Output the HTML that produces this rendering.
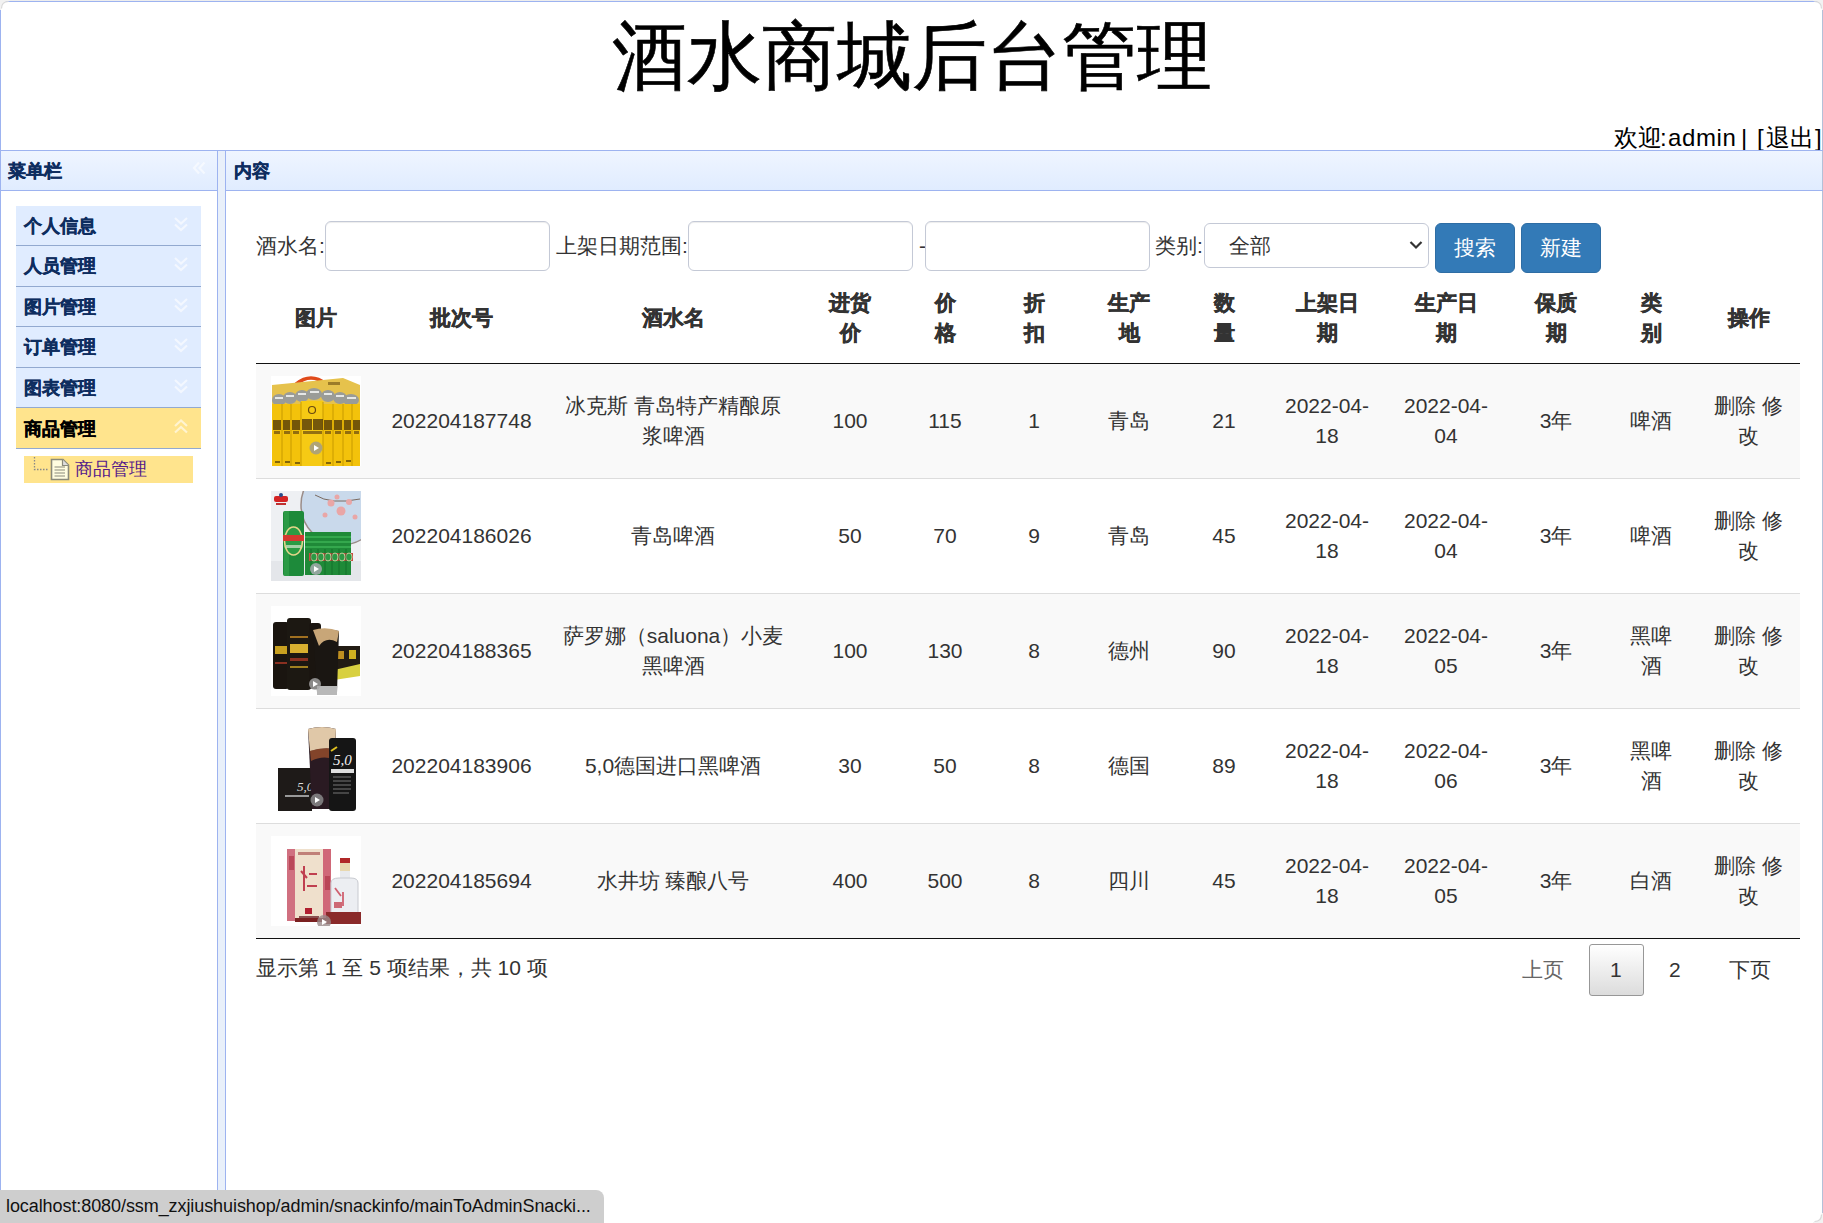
<!DOCTYPE html>
<html><head><meta charset="utf-8">
<style>
html,body{margin:0;padding:0}
body{width:1823px;height:1223px;overflow:hidden;position:relative;background:#fff;font-family:"Liberation Sans",sans-serif;color:#333}
.abs{position:absolute}
.hl{position:absolute;height:1px;background:#9DB3F0}
.vl{position:absolute;width:1px;background:#9DB3F0}
.phead{position:absolute;top:151px;height:39px;background:linear-gradient(to bottom,#EFF5FF 0,#E0ECFF 100%)}
.ptitle{position:absolute;top:159px;font-size:18px;line-height:24px;font-weight:bold;color:#0E2D5F;white-space:nowrap;-webkit-text-stroke:0.4px currentColor}
#title{position:absolute;left:0;width:1823px;top:6px;text-align:center;font-size:75px;line-height:100px;color:#000;white-space:nowrap;-webkit-text-stroke:0.6px #000}
.wl{position:absolute;top:122px;font-size:24px;line-height:32px;color:#000;white-space:nowrap}
.acc{position:absolute;left:16px;width:185px;background:#E0ECFF;border-bottom:1px solid #92A9D0}
.acc span{position:absolute;left:8px;top:8px;font-size:18px;line-height:24px;font-weight:bold;color:#0E2D5F;white-space:nowrap;-webkit-text-stroke:0.4px currentColor}
.acc svg{position:absolute;left:172px;top:10px}
.lbl{position:absolute;top:231px;font-size:21px;line-height:30px;color:#333;white-space:nowrap}
.inp{position:absolute;top:221px;height:48px;width:223px;border:1px solid #c4c9d6;border-radius:6px;background:#fff;box-shadow:inset 0 1px 1px rgba(0,0,0,.075)}
.btn{position:absolute;top:223px;height:48px;width:78px;background:#337ab7;border:1px solid #2e6da4;border-radius:6px;color:#fff;font-size:21px;line-height:48px;text-align:center;white-space:nowrap}
table.dt{position:absolute;left:256px;top:273px;width:1544px;border-collapse:separate;border-spacing:0;table-layout:fixed;font-size:21px;line-height:30px;color:#333}
table.dt th{font-weight:bold;-webkit-text-stroke:0.5px currentColor;padding:15px 0;text-align:center;border-bottom:1px solid #111;vertical-align:middle}
table.dt td{padding:12px 0;text-align:center;vertical-align:middle;border-top:1px solid #ddd;height:90px}
table.dt tr.first td{border-top:none}
table.dt tr.odd td{background:#f9f9f9}
table.dt tbody tr:last-child td{border-bottom:1px solid #111}
.ctext{display:inline-block}
#info{position:absolute;left:256px;top:953px;font-size:21px;line-height:30px;color:#333;white-space:nowrap}
.pg{position:absolute;top:955px;font-size:21px;line-height:30px;color:#333;white-space:nowrap}
#status{position:absolute;left:0;top:1190px;width:604px;height:33px;background:#cecece;border-top-right-radius:8px;font-size:18px;line-height:33px;color:#111;white-space:nowrap;overflow:hidden;letter-spacing:-0.08px;padding-left:6px;box-sizing:border-box}
</style></head>
<body>
<!-- outer borders -->
<div class="abs" style="left:0;top:0;width:1823px;height:1px;background:#ededed"></div>
<div class="hl" style="left:0;top:1px;width:1823px"></div>
<div class="vl" style="left:0;top:1px;height:1222px"></div>
<div class="vl" style="left:1822px;top:1px;height:1222px;background:#b4c0d8"></div>
<div id="title">酒水商城后台管理</div>
<div class="wl" style="left:1614px">欢迎</div><div class="wl" style="left:1660px">:</div><div class="wl" style="left:1668px;letter-spacing:0.6px">admin</div><div class="wl" style="left:1741px">|</div><div class="wl" style="left:1757px">[</div><div class="wl" style="left:1766px">退出</div><div class="wl" style="left:1815px">]</div>
<div class="hl" style="left:0;top:150px;width:1823px"></div>

<!-- west -->
<div class="phead" style="left:1px;width:216px"></div>
<div class="ptitle" style="left:8px">菜单栏</div>
<svg class="abs" style="left:191px;top:160px" width="16" height="16" viewBox="0 0 16 16"><path d="M8 2.5 L3 8 L8 13.5 M13.5 2.5 L8.5 8 L13.5 13.5" stroke="#fff" stroke-width="2.2" fill="none" opacity=".55"/></svg>
<div class="hl" style="left:0;top:190px;width:218px"></div>
<div class="vl" style="left:217px;top:150px;height:1073px"></div>
<div class="abs" style="left:218px;top:151px;width:7px;height:1072px;background:#E9F0FA"></div>
<div class="vl" style="left:225px;top:150px;height:1073px"></div>

<!-- center header -->
<div class="phead" style="left:226px;width:1596px"></div>
<div class="ptitle" style="left:234px">内容</div>
<div class="hl" style="left:225px;top:190px;width:1598px"></div>

<!-- accordion -->
<div class="acc" style="top:206px;height:39px"><span>个人信息</span><svg style="position:absolute;left:156px;top:10px" width="18" height="17" viewBox="0 0 18 17"><path d="M3 2 L9 7.5 L15 2 M3 8.5 L9 14 L15 8.5" stroke="#fff" stroke-width="2.2" fill="none" opacity=".6"/></svg></div>
<div class="acc" style="top:246px;height:40px"><span>人员管理</span><svg style="position:absolute;left:156px;top:10px" width="18" height="17" viewBox="0 0 18 17"><path d="M3 2 L9 7.5 L15 2 M3 8.5 L9 14 L15 8.5" stroke="#fff" stroke-width="2.2" fill="none" opacity=".6"/></svg></div>
<div class="acc" style="top:287px;height:39px"><span>图片管理</span><svg style="position:absolute;left:156px;top:10px" width="18" height="17" viewBox="0 0 18 17"><path d="M3 2 L9 7.5 L15 2 M3 8.5 L9 14 L15 8.5" stroke="#fff" stroke-width="2.2" fill="none" opacity=".6"/></svg></div>
<div class="acc" style="top:327px;height:40px"><span>订单管理</span><svg style="position:absolute;left:156px;top:10px" width="18" height="17" viewBox="0 0 18 17"><path d="M3 2 L9 7.5 L15 2 M3 8.5 L9 14 L15 8.5" stroke="#fff" stroke-width="2.2" fill="none" opacity=".6"/></svg></div>
<div class="acc" style="top:368px;height:39px"><span>图表管理</span><svg style="position:absolute;left:156px;top:10px" width="18" height="17" viewBox="0 0 18 17"><path d="M3 2 L9 7.5 L15 2 M3 8.5 L9 14 L15 8.5" stroke="#fff" stroke-width="2.2" fill="none" opacity=".6"/></svg></div>
<div class="acc" style="top:408px;height:40px;background:#ffe48d"><span style="color:#000;top:9px">商品管理</span><svg style="position:absolute;left:156px;top:10px" width="18" height="17" viewBox="0 0 18 17"><path d="M3 8 L9 2.5 L15 8 M3 14.5 L9 9 L15 14.5" stroke="#fff" stroke-width="2.2" fill="none" opacity=".6"/></svg></div>
<div class="abs" style="left:24px;top:456px;width:169px;height:27px;background:#ffe48d"></div>
<svg class="abs" style="left:30px;top:456px" width="42" height="27" viewBox="0 0 42 27"><path d="M4.5 1 V13.5 H18" stroke="#888" stroke-width="1.3" stroke-dasharray="1.5 1.5" fill="none"/><path d="M21.5 3.5 H33 L38.5 9 V23.5 H21.5 Z" fill="#FFFDE0" stroke="#8a8a7a" stroke-width="1.6"/><path d="M32.5 3.5 V9.5 H38.5" fill="#ddd" stroke="#8a8a7a" stroke-width="1.2"/><path d="M24.5 11 H35 M24.5 14 H35 M24.5 17 H35 M24.5 20 H35" stroke="#8a8a7a" stroke-width="1.2"/></svg>
<div class="abs" style="left:75px;top:457px;font-size:18px;line-height:24px;color:#551A8B;white-space:nowrap">商品管理</div>

<!-- search form -->
<div class="lbl" style="left:256px">酒水名:</div>
<div class="inp" style="left:325px"></div>
<div class="lbl" style="left:556px">上架日期范围:</div>
<div class="inp" style="left:688px"></div>
<div class="lbl" style="left:919px">-</div>
<div class="inp" style="left:925px"></div>
<div class="lbl" style="left:1155px">类别:</div>
<div class="abs" style="left:1204px;top:223px;width:223px;height:43px;border:1px solid #c4c9d6;border-radius:6px;background:#fff"></div>
<div class="abs" style="left:1229px;top:231px;font-size:21px;line-height:30px;color:#333">全部</div>
<svg class="abs" style="left:1408px;top:239px" width="16" height="12" viewBox="0 0 16 12"><path d="M2.5 3 L8 8.5 L13.5 3" stroke="#333" stroke-width="2.2" fill="none"/></svg>
<div class="btn" style="left:1435px">搜索</div>
<div class="btn" style="left:1521px">新建</div>

<table class="dt">
<colgroup><col style="width:120px"><col style="width:171px"><col style="width:252px"><col style="width:102px"><col style="width:88px"><col style="width:90px"><col style="width:100px"><col style="width:90px"><col style="width:116px"><col style="width:122px"><col style="width:98px"><col style="width:92px"><col style="width:103px"></colgroup>
<thead><tr><th>图片</th><th>批次号</th><th>酒水名</th><th>进货<br>价</th><th>价<br>格</th><th>折<br>扣</th><th>生产<br>地</th><th>数<br>量</th><th>上架日<br>期</th><th>生产日<br>期</th><th>保质<br>期</th><th>类<br>别</th><th>操作</th></tr></thead>
<tbody>
<tr class="odd first"><td><svg width="90" height="90" viewBox="0 0 90 90" style="display:block;margin:0 auto"><rect width="90" height="90" fill="#fff"/><path d="M25 8 Q40 -4 55 8" stroke="#e04a1a" stroke-width="3.5" fill="none"/><path d="M1 9 L72 2 L89 9 L89 30 L1 30 Z" fill="#E6C24C"/><rect x="57" y="6" width="12" height="3" fill="#8a6a20" opacity=".8"/><g fill="#9a9c98"><ellipse cx="8" cy="24" rx="7" ry="6"/><ellipse cx="19" cy="22" rx="7" ry="6"/><ellipse cx="31" cy="20" rx="7" ry="6"/><ellipse cx="43" cy="18" rx="8" ry="6"/><ellipse cx="57" cy="20" rx="7" ry="6"/><ellipse cx="69" cy="22" rx="7" ry="6"/><ellipse cx="80" cy="24" rx="8" ry="6"/></g><g fill="#e6e8e6"><rect x="4" y="21" width="8" height="2"/><rect x="15" y="19" width="8" height="2"/><rect x="27" y="17" width="8" height="2"/><rect x="39" y="15" width="9" height="2"/><rect x="53" y="17" width="8" height="2"/><rect x="65" y="19" width="8" height="2"/><rect x="76" y="21" width="9" height="2"/></g><rect x="1" y="28" width="88" height="62" fill="#F3C20B"/><rect x="30" y="25" width="22" height="65" fill="#F6CA14"/><path d="M11 28 V90 M20 28 V90 M30 26 V90 M52 26 V90 M62 28 V90 M72 28 V90 M81 28 V90" stroke="#c89a00" stroke-width="1"/><circle cx="41" cy="34" r="3.5" fill="none" stroke="#6a4a10" stroke-width="1.2"/><g fill="#4a3208" opacity=".75"><rect x="2" y="44" width="8" height="10"/><rect x="12" y="44" width="7" height="10"/><rect x="21" y="44" width="8" height="10"/><rect x="31" y="43" width="10" height="11"/><rect x="42" y="43" width="10" height="11"/><rect x="53" y="44" width="8" height="10"/><rect x="63" y="44" width="8" height="10"/><rect x="73" y="44" width="7" height="10"/><rect x="82" y="44" width="7" height="10"/></g><g fill="#6a4a10" opacity=".7"><rect x="3" y="55" width="6" height="3"/><rect x="13" y="55" width="6" height="3"/><rect x="22" y="55" width="6" height="3"/><rect x="32" y="55" width="19" height="3"/><rect x="54" y="55" width="6" height="3"/><rect x="64" y="55" width="6" height="3"/><rect x="74" y="55" width="6" height="3"/><rect x="83" y="55" width="5" height="3"/></g><g fill="#3a2a08" opacity=".6"><rect x="4" y="85" width="5" height="2"/><rect x="14" y="85" width="5" height="2"/><rect x="24" y="86" width="5" height="2"/><rect x="55" y="86" width="5" height="2"/><rect x="65" y="85" width="5" height="2"/><rect x="75" y="84" width="5" height="2"/></g><circle cx="45" cy="72" r="6.5" fill="#a8a080" opacity=".9"/><path d="M43 69 L48 72 L43 75 Z" fill="#fff"/></svg></td><td>202204187748</td><td>冰克斯 青岛特产精酿原<br>浆啤酒</td><td>100</td><td>115</td><td>1</td><td>青岛</td><td>21</td><td>2022-04-<br>18</td><td>2022-04-<br>04</td><td>3年</td><td>啤酒</td><td>删除 修<br>改</td></tr>
<tr class="even"><td><svg width="90" height="90" viewBox="0 0 90 90" style="display:block;margin:0 auto"><rect width="90" height="90" fill="#eef0f3"/><rect x="0" y="70" width="90" height="20" fill="#e4e6ea"/><circle cx="70" cy="14" r="40" fill="#c9d9eb"/><circle cx="70" cy="14" r="40" fill="none" stroke="#9a8c88" stroke-width="1.5"/><rect x="0" y="0" width="30" height="90" fill="#eef0f3" opacity="0"/><path d="M44 4 Q60 14 89 8" stroke="#7a6a60" stroke-width="1" fill="none"/><g fill="#e9a6a6"><circle cx="60" cy="12" r="3.5"/><circle cx="70" cy="20" r="4.5"/><circle cx="78" cy="11" r="3"/><circle cx="54" cy="24" r="2.5"/><circle cx="84" cy="26" r="2.5"/><circle cx="66" cy="6" r="2.5"/></g><rect x="3" y="5" width="14" height="6" rx="2" fill="#d42424"/><circle cx="10" cy="4" r="2" fill="#2a4a8a"/><rect x="5" y="12" width="10" height="2" fill="#c03030"/><rect x="34" y="41" width="46" height="43" fill="#1f8a38"/><path d="M34 46 H80 M34 51 H80 M34 56 H80" stroke="#3cb254" stroke-width="1.4"/><rect x="38" y="62" width="44" height="8" fill="#c94a40"/><g fill="#2a9a44" stroke="#d8e0b0" stroke-width=".8"><ellipse cx="43" cy="66" rx="3" ry="4"/><ellipse cx="50" cy="66" rx="3" ry="4"/><ellipse cx="57" cy="66" rx="3" ry="4"/><ellipse cx="64" cy="66" rx="3" ry="4"/><ellipse cx="71" cy="66" rx="3" ry="4"/><ellipse cx="78" cy="66" rx="3" ry="4"/></g><path d="M40 58 V84 M47 58 V84 M54 58 V84 M61 58 V84 M68 58 V84 M75 58 V84" stroke="#136a28" stroke-width=".8"/><rect x="12" y="20" width="21" height="65" rx="2" fill="#1d8a3a"/><rect x="13" y="20" width="5" height="65" fill="#3aaa50" opacity=".5"/><ellipse cx="22.5" cy="50" rx="9" ry="14" fill="#2a9c44" stroke="#e6d68a" stroke-width="1.6"/><rect x="12" y="44" width="21" height="6" fill="#d43a30"/><rect x="15" y="54" width="15" height="3" fill="#d8e8d0" opacity=".7"/><circle cx="45" cy="78" r="6" fill="#a8aab0" opacity=".85"/><path d="M43 75 L48 78 L43 81 Z" fill="#fff"/></svg></td><td>202204186026</td><td>青岛啤酒</td><td>50</td><td>70</td><td>9</td><td>青岛</td><td>45</td><td>2022-04-<br>18</td><td>2022-04-<br>04</td><td>3年</td><td>啤酒</td><td>删除 修<br>改</td></tr>
<tr class="odd"><td><svg width="90" height="90" viewBox="0 0 90 90" style="display:block;margin:0 auto"><rect width="90" height="90" fill="#fff"/><rect x="2" y="16" width="16" height="67" rx="3" fill="#1a1510"/><rect x="16" y="12" width="24" height="72" rx="3" fill="#1c1812"/><rect x="38" y="17" width="12" height="66" rx="3" fill="#1a1510"/><rect x="4" y="40" width="12" height="8" fill="#c8a020"/><rect x="19" y="38" width="18" height="9" fill="#d8b030"/><rect x="19" y="30" width="18" height="2" fill="#a07020"/><rect x="19" y="52" width="18" height="3" fill="#8a3020"/><rect x="19" y="60" width="18" height="2" fill="#a08020"/><rect x="4" y="56" width="12" height="2" fill="#8a3020"/><rect x="63" y="40" width="26" height="30" fill="#221c14"/><rect x="67" y="45" width="6" height="8" fill="#c09020"/><rect x="78" y="44" width="7" height="9" fill="#d0b020"/><path d="M63 64 L89 58 L89 70 L63 74 Z" fill="#d8d040"/><path d="M42 24 Q55 22 68 25 L66 86 L46 86 Z" fill="#1a1612"/><path d="M42 24 Q55 20 68 25 L66 36 Q55 30 48 40 Z" fill="#c8a678"/><path d="M46 80 H66 V89 H46 Z" fill="#b8b8b8"/><circle cx="44" cy="78" r="6" fill="#a8a8a8" opacity=".8"/><path d="M42 75 L47 78 L42 81 Z" fill="#fff"/></svg></td><td>202204188365</td><td>萨罗娜（saluona）小麦<br>黑啤酒</td><td>100</td><td>130</td><td>8</td><td>德州</td><td>90</td><td>2022-04-<br>18</td><td>2022-04-<br>05</td><td>3年</td><td>黑啤<br>酒</td><td>删除 修<br>改</td></tr>
<tr class="even"><td><svg width="90" height="90" viewBox="0 0 90 90" style="display:block;margin:0 auto"><rect width="90" height="90" fill="#fff"/><rect x="7" y="47" width="34" height="43" fill="#1e1a18"/><text x="26" y="70" font-family="Liberation Serif" font-style="italic" font-size="13" fill="#ddd">5,0</text><rect x="14" y="74" width="24" height="2" fill="#999"/><path d="M37 8 Q51 4 65 8 L62 88 L41 88 Z" fill="#2a1a22"/><path d="M37 8 Q51 4 65 8 L64 28 Q51 26 39 30 Z" fill="#e0c8a8"/><path d="M39 30 Q51 26 64 28 L63 38 Q51 34 40 40 Z" fill="#c06030" opacity=".6"/><rect x="58" y="17" width="27" height="73" rx="3" fill="#151515"/><text x="62" y="44" font-family="Liberation Serif" font-style="italic" font-size="15" fill="#f0f0f0">5,0</text><rect x="60" y="48" width="23" height="4" fill="#ddd"/><path d="M62 56 H80 M62 60 H80 M62 64 H80 M62 68 H80 M62 72 H78" stroke="#777" stroke-width="1.2"/><path d="M60 30 L66 26" stroke="#e0c020" stroke-width="2"/><circle cx="46" cy="79" r="6.5" fill="#8a8a8a" opacity=".85"/><path d="M44 76 L49 79 L44 82 Z" fill="#fff"/></svg></td><td>202204183906</td><td>5,0德国进口黑啤酒</td><td>30</td><td>50</td><td>8</td><td>德国</td><td>89</td><td>2022-04-<br>18</td><td>2022-04-<br>06</td><td>3年</td><td>黑啤<br>酒</td><td>删除 修<br>改</td></tr>
<tr class="odd"><td><svg width="90" height="90" viewBox="0 0 90 90" style="display:block;margin:0 auto"><rect width="90" height="90" fill="#fff"/><rect x="16" y="13" width="44" height="72" fill="#efe0cc"/><rect x="16" y="13" width="8" height="72" fill="#d07080"/><rect x="52" y="13" width="8" height="72" fill="#d06878"/><rect x="18" y="20" width="5" height="14" fill="#b03848" opacity=".7"/><rect x="54" y="40" width="5" height="14" fill="#b03848" opacity=".7"/><rect x="27" y="16" width="22" height="3" fill="#a04040" opacity=".6"/><path d="M30 35 L36 42 M33 30 V55 M38 38 H46 M36 50 H46" stroke="#c04050" stroke-width="2"/><rect x="34" y="72" width="7" height="6" fill="#b02030"/><rect x="28" y="80" width="20" height="2" fill="#8a5050"/><rect x="24" y="82" width="36" height="4" fill="#7a2020"/><rect x="69" y="22" width="10" height="5" fill="#b02828"/><rect x="69" y="27" width="10" height="8" fill="#e8d8b0"/><rect x="69" y="35" width="10" height="9" fill="#e8eaee"/><path d="M60 47 Q60 42 68 42 H80 Q87 42 87 47 V78 H60 Z" fill="#eceef2" stroke="#c8cad0" stroke-width="1"/><path d="M64 52 L70 60 M72 56 V70" stroke="#d06070" stroke-width="1.8"/><rect x="63" y="66" width="8" height="6" fill="#c03040" opacity=".7"/><path d="M55 76 H90 V88 H55 Z" fill="#8a2a2a"/><circle cx="53" cy="86" r="7" fill="#9a8a8a" opacity=".8"/><path d="M51 83 L56 86 L51 89 Z" fill="#fff"/></svg></td><td>202204185694</td><td>水井坊 臻酿八号</td><td>400</td><td>500</td><td>8</td><td>四川</td><td>45</td><td>2022-04-<br>18</td><td>2022-04-<br>05</td><td>3年</td><td>白酒</td><td>删除 修<br>改</td></tr>
</tbody></table>

<div id="info">显示第 1 至 5 项结果，共 10 项</div>
<div class="pg" style="left:1522px;color:#666">上页</div>
<div class="abs" style="left:1589px;top:944px;width:53px;height:50px;border:1px solid #979797;border-radius:3px;background:linear-gradient(to bottom,#fff 0%,#dcdcdc 100%)"></div>
<div class="pg" style="left:1610px">1</div>
<div class="pg" style="left:1669px">2</div>
<div class="pg" style="left:1729px">下页</div>

<svg class="abs" style="left:0;top:0" width="10" height="10" viewBox="0 0 10 10"><path d="M0 0 H10 V1 Q1 1 1 10 H0 Z" fill="#f2f2f2"/><path d="M8.5 1.5 Q1.5 1.5 1.5 8.5" stroke="#d8d8d8" stroke-width="1.2" fill="none"/></svg>
<svg class="abs" style="left:1813px;top:0" width="10" height="10" viewBox="0 0 10 10"><path d="M0 0 H10 V10 H9 Q9 1 0 1 Z" fill="#f2f2f2"/><path d="M1.5 1.5 Q8.5 1.5 8.5 8.5" stroke="#d8d8d8" stroke-width="1.2" fill="none"/></svg>
<svg class="abs" style="left:1813px;top:1213px" width="10" height="10" viewBox="0 0 10 10"><path d="M10 0 V10 H0 V9 Q9 9 9 0 Z" fill="#f2f2f2"/><path d="M8.5 1.5 Q8.5 8.5 1.5 8.5" stroke="#d8d8d8" stroke-width="1.2" fill="none"/></svg>
<div id="status">localhost:8080/ssm_zxjiushuishop/admin/snackinfo/mainToAdminSnacki...</div>
</body></html>
